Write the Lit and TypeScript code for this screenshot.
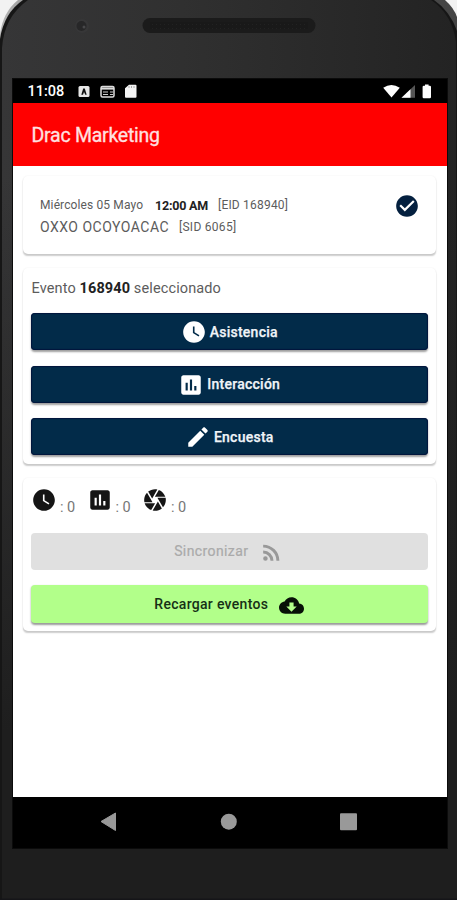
import { LitElement, html, css } from "lit";
import { customElement } from "lit/decorators.js";

const CLOCK = "M12 2C6.500 2 2 6.500 2 12s4.500 10 10 10 10-4.500 10-10S17.500 2 12 2zm4.200 14.200L11 13V7h1.500v5.200l4.500 2.700-.8 1.300z";
const CHART = "M19 3H5c-1.100 0-2 .9-2 2v14c0 1.100.9 2 2 2h14c1.100 0 2-.9 2-2V5c0-1.100-.9-2-2-2zM9 17H7v-7h2v7zm4 0h-2V7h2v10zm4 0h-2v-4h2v4z";
const PENCIL = "M3 17.250V21h3.750L17.810 9.940l-3.750-3.750L3 17.250zM20.710 7.040c.39-.39.39-1.020 0-1.410l-2.340-2.340c-.39-.39-1.020-.39-1.410 0l-1.830 1.830 3.750 3.750 1.830-1.830z";
const CHECK = "M12 2C6.480 2 2 6.480 2 12s4.480 10 10 10 10-4.480 10-10S17.520 2 12 2zm-2 15l-5-5 1.410-1.410L10 14.170l7.590-7.590L19 8l-9 9z";
const CAMERA = "M9.400 10.500l4.770-8.260C13.470 2.090 12.750 2 12 2c-2.400 0-4.600.85-6.320 2.250l3.660 6.350.06-.1zM21.540 9c-.92-2.920-3.150-5.260-6-6.340L11.880 9h9.660zm.26 1h-7.490l.29.5 4.760 8.250C21 16.970 22 14.610 22 12c0-.69-.07-1.350-.2-2zM8.540 12l-3.900-6.750C3.010 7.030 2 9.390 2 12c0 .69.07 1.350.2 2h7.490l-1.150-2zm-6.080 3c.92 2.920 3.150 5.260 6 6.340L12.120 15H2.460zm11.270 0l-3.900 6.760c.7.15 1.420.24 2.170.24 2.400 0 4.600-.85 6.320-2.250l-3.660-6.350-.93 1.600z";
const CLOUD = "M19.350 10.040C18.670 6.590 15.640 4 12 4 9.110 4 6.600 5.640 5.350 8.040 2.340 8.360 0 10.910 0 14c0 3.310 2.690 6 6 6h13c2.760 0 5-2.240 5-5 0-2.640-2.050-4.780-4.650-4.960zM17 13l-5 5-5-5h3V9h4v4h3z";
const FEED = "M6.180 15.640a2.180 2.180 0 1 1 0 4.360 2.180 2.180 0 0 1 0-4.360M4 4.440A15.560 15.560 0 0 1 19.560 20h-2.830A12.730 12.730 0 0 0 4 7.270zm0 5.660a9.900 9.900 0 0 1 9.900 9.900h-2.830A7.070 7.070 0 0 0 4 12.930z";

const icon = (path: string, size: number, cls = "") =>
  html`<svg class="icon ${cls}" width=${size} height=${size} viewBox="0 0 24 24"><path d=${path} /></svg>`;

const ACTIONS = [
  { label: "Asistencia", path: CLOCK },
  { label: "Interacción", path: CHART },
  { label: "Encuesta", path: PENCIL },
];

@customElement("phone-shell")
class PhoneShell extends LitElement {
  static styles = css`
    :host { display: block; width: 457px; height: 900px; }
    svg { display: block; }
  `;
  render() {
    return html`<svg width="457" height="900" viewBox="0 0 457 900">
      <defs>
        <linearGradient id="body" x1="0" y1="0" x2="457" y2="0" gradientUnits="userSpaceOnUse">
          <stop offset="0" stop-color="#363637" /><stop offset=".4" stop-color="#303030" /><stop offset="1" stop-color="#232323" />
        </linearGradient>
        <linearGradient id="fade" x1="0" y1="0" x2="0" y2="1">
          <stop offset=".15" stop-color="#1e1e1e" stop-opacity="0" /><stop offset=".8" stop-color="#1e1e1e" />
        </linearGradient>
        <linearGradient id="rim" x1="0" y1="0" x2="1" y2="0">
          <stop offset="0" stop-color="#b5b5b5" /><stop offset=".15" stop-color="#777" /><stop offset="1" stop-color="#444" />
        </linearGradient>
        <pattern id="mesh" width="4" height="4" patternUnits="userSpaceOnUse">
          <rect width="4" height="4" fill="#191919" /><rect width="1" height="1" fill="#222" />
        </pattern>
      </defs>
      <rect width="457" height="900" fill="#f2f2f2" />
      <path d="M0 900V34Q3 12 18 0H445Q454 8 457 17V900Z" fill="url(#rim)" />
      <path d="M0 900V39Q4 13 23 0H434Q450 11 457 31V900Z" fill="#161616" />
      <path d="M2 900V48Q4 17 28 0H431Q452 14 456 42V900Z" fill="url(#body)" />
      <path d="M2 900V48H457V900Z" fill="url(#fade)" />
      <circle cx="82" cy="26" r="7" fill="#373738" />
      <circle cx="81.500" cy="26" r="5" fill="#272728" />
      <circle cx="84" cy="27" r="1.500" fill="#48484a" />
      <rect x="142.500" y="18" width="173" height="15" rx="7.500" fill="#1b1b1b" />
      <rect x="150" y="22" width="158" height="7" fill="url(#mesh)" />
      <rect y="898.500" width="457" height="1.500" fill="#151518" />
    </svg>`;
  }
}

@customElement("status-bar")
class StatusBar extends LitElement {
  static styles = css`
    :host { display: flex; align-items: center; height: 24px; box-sizing: border-box; padding: 1px 14px 0 14.500px; background: #000; color: #fff; }
    .time { font: 500 14.500px/22px Roboto, sans-serif; width: 50.500px; }
    .left { display: flex; align-items: center; flex: 1; }
    svg { display: block; }
  `;
  render() {
    return html`
      <div class="left">
        <span class="time">11:08</span>
        <svg width="60" height="16" viewBox="0 0 60 16">
          <rect x="0.500" y="2" width="11" height="11" rx="1.500" fill="#e8e8e8" />
          <path d="M3.300 10.800L5.200 4.500h1.600l1.900 6.300H7.300L6 8l-1 2.800z" fill="#111" />
          <rect x="23" y="2.500" width="13" height="10.500" rx="1.500" fill="none" stroke="#ddd" stroke-width="1.500" />
          <path d="M23 4.500h13" stroke="#ddd" stroke-width="2.200" />
          <path d="M25 8h5M32 8h3M25 10.500h5M32 10.500h3" stroke="#ccc" />
          <path d="M51 .8h6.500q1 0 1 1V12.800q0 1-1 1h-9.500q-1 0-1-1V4.300z" fill="#f4f4f4" />
          <path d="M51 2v2M53.500 2v2M56 2v2" stroke="#999" stroke-width=".8" />
        </svg>
      </div>
      <svg width="50" height="16" viewBox="0 0 50 16">
        <path d="M.2 3.800Q8.400-2 16.800 3.800L8.500 13.500z" fill="#fff" />
        <path d="M18.500 13.800L32 1v12.800z" fill="#555" />
        <path d="M18.500 13.800l9-8.500v8.500z" fill="#fff" />
        <path d="M42 .6h3.600v1.200h1.200q1.200 0 1.200 1.200v10q0 1.200-1.200 1.200h-6q-1.200 0-1.200-1.200V3q0-1.200 1.200-1.200H42z" fill="#fff" />
      </svg>`;
  }
}

@customElement("app-root")
class AppRoot extends LitElement {
  static styles = css`
    :host { display: block; position: relative; width: 457px; height: 900px; overflow: hidden; font-family: Roboto, sans-serif; color: #5c5c5c; }
    .screen { position: absolute; left: 13px; top: 79px; width: 434px; height: 768.500px; display: flex; flex-direction: column; background: #fff; box-shadow: 0 0 0 1px #0b0b0b; }
    .bar { flex: none; height: 63px; box-sizing: border-box; padding: 0 18.500px; background: #f00; color: #ffe0e0; font-size: 19.500px; line-height: 65px; letter-spacing: -0.250px; -webkit-text-stroke: 0.300px #ffe0e0; }
    .content { flex: 1; display: flex; flex-direction: column; gap: 14px; padding: 10px 11px 0 10px; }
    .card { box-sizing: border-box; border-radius: 5px; background: #fff; padding: 0 8.500px 0 8px; box-shadow: 0 2px 1.500px -0.500px rgba(0,0,0,.2), 0 0 2px rgba(0,0,0,.07); }
    .event { height: 78px; display: flex; justify-content: space-between; padding: 18px 16px 0 17px; }
    .line { display: flex; align-items: center; height: 22px; white-space: pre; font-size: 12px; }
    .day { width: 115px; letter-spacing: 0.120px; }
    .hour { width: 63px; font-weight: 700; color: #222; font-size: 12.500px; letter-spacing: -0.200px; }
    .eid { letter-spacing: 0.200px; }
    .store { width: 139px; font-size: 14px; letter-spacing: 0.500px; }
    .sid { letter-spacing: 0.280px; }
    .icon { display: block; flex: none; fill: currentColor; }
    .tick { color: #04203f; margin-top: -1.500px; }
    .actions { height: 196px; }
    .title { font-size: 14.500px; line-height: 41px; height: 45px; white-space: pre; letter-spacing: 0.120px; padding-left: 0.500px; }
    .title b { color: #222; }
    .btn { display: flex; align-items: center; justify-content: center; width: 100%; height: 37px; margin: 0 0 15.500px; padding: 0; border: 0; border-radius: 4px; background: #022b49; color: #f0f4f8; font: 500 14px/36px Roboto, sans-serif; letter-spacing: 0.250px; box-shadow: 0 1.500px 2px rgba(0,0,0,.38), inset 0 0 1px 1px #02143c; }
    .act { -webkit-text-stroke: 0.250px #f0f4f8; }
    .btn .icon { color: #fff; margin-right: 3px; margin-top: 1px; }
    .sync { height: 153px; }
    .counts { display: flex; height: 54.500px; padding: 9px 0 0; box-sizing: border-box; }
    .count { display: flex; width: 55.500px; color: #151515; }
    .count span { font-size: 14.500px; line-height: 42px; color: #777; margin-left: 3px; white-space: pre; }
    .btn.off { background: #e0e0e0; color: #aaa; box-shadow: none; font-weight: 400; letter-spacing: 0.400px; -webkit-text-stroke: 0.200px #aaa; }
    .btn.go { height: 38px; background: #b2ff8a; color: #163016; margin: 0; box-shadow: 0 1.500px 2px rgba(0,0,0,.4); letter-spacing: 0.300px; }
    .btn .feed { color: #999; margin: 3px 0 0 11px; }
    .btn .cloud { color: #071007; margin: 2px 0 0 11px; }
    .nav { flex: none; height: 51px; background: #000; }
    .nav svg { display: block; }
  `;
  render() {
    return html`
      <phone-shell></phone-shell>
      <main class="screen">
        <status-bar></status-bar>
        <header class="bar">Drac Marketing</header>
        <div class="content">
          <section class="card event">
            <div>
              <div class="line"><span class="day">Miércoles 05 Mayo</span><span class="hour">12:00 AM</span><span class="eid">[EID 168940]</span></div>
              <div class="line"><span class="store">OXXO OCOYOACAC</span><span class="sid">[SID 6065]</span></div>
            </div>
            ${icon(CHECK, 26, "tick")}
          </section>
          <section class="card actions">
            <div class="title">Evento <b>168940</b> seleccionado</div>
            ${ACTIONS.map((a) => html`<button class="btn act">${icon(a.path, 26)}<span>${a.label}</span></button>`)}
          </section>
          <section class="card sync">
            <div class="counts">
              ${[CLOCK, CHART, CAMERA].map((p) => html`<div class="count">${icon(p, 26)}<span>: 0</span></div>`)}
            </div>
            <button class="btn off"><span>Sincronizar</span>${icon(FEED, 25, "feed")}</button>
            <button class="btn go"><span>Recargar eventos</span>${icon(CLOUD, 25, "cloud")}</button>
          </section>
        </div>
        <nav class="nav">
          <svg width="434" height="51" viewBox="0 0 434 51">
            <g fill="#999">
              <path d="M88 24.500L102.500 16v17.500z" stroke="#999" stroke-linejoin="round" />
              <circle cx="215.800" cy="24.700" r="8" />
              <rect x="327" y="16.300" width="17" height="17" rx="1" />
            </g>
          </svg>
        </nav>
      </main>`;
  }
}
